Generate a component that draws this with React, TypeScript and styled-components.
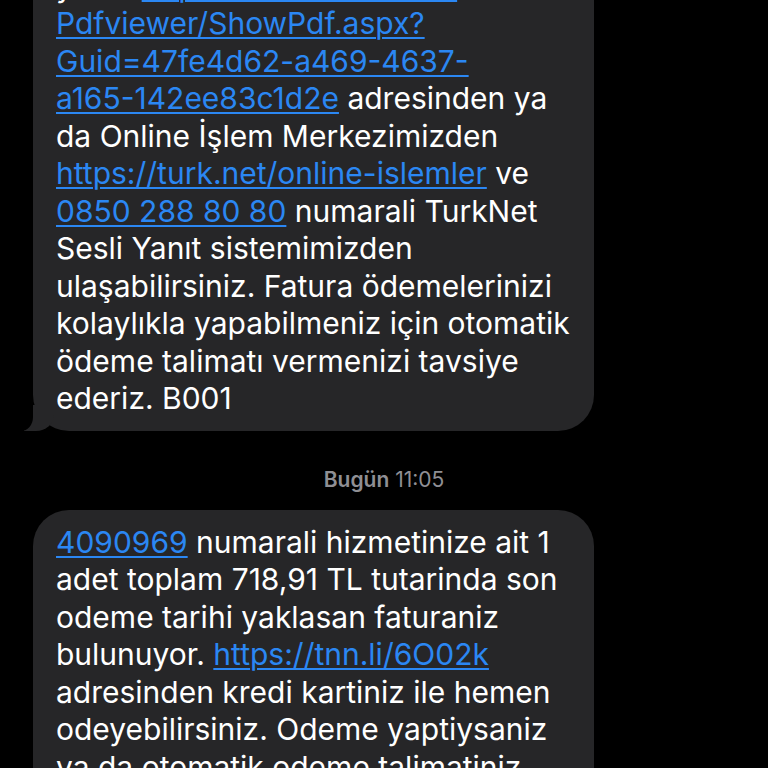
import styled, { createGlobalStyle } from 'styled-components';

const GlobalStyle = createGlobalStyle`
  html, body {
    margin: 0;
    padding: 0;
    background: #000;
  }
`;

type Seg = { t: string; link?: boolean };

const firstMessage: Seg[][] = [
  [{ t: 'Faturanızın detaylarını' }],
  [{ t: 'ya da ' }, { t: 'https://online.turk.net/', link: true }],
  [{ t: 'Pdfviewer/ShowPdf.aspx?', link: true }],
  [{ t: 'Guid=47fe4d62-a469-4637-', link: true }],
  [{ t: 'a165-142ee83c1d2e', link: true }, { t: ' adresinden ya' }],
  [{ t: 'da Online İşlem Merkezimizden' }],
  [{ t: 'https://turk.net/online-islemler', link: true }, { t: ' ve' }],
  [{ t: '0850 288 80 80', link: true }, { t: ' numarali TurkNet' }],
  [{ t: 'Sesli Yanıt sistemimizden' }],
  [{ t: 'ulaşabilirsiniz. Fatura ödemelerinizi' }],
  [{ t: 'kolaylıkla yapabilmeniz için otomatik' }],
  [{ t: 'ödeme talimatı vermenizi tavsiye' }],
  [{ t: 'ederiz. B001' }],
];

const secondMessage: Seg[][] = [
  [{ t: '4090969', link: true }, { t: ' numarali hizmetinize ait 1' }],
  [{ t: 'adet toplam 718,91 TL tutarinda son' }],
  [{ t: 'odeme tarihi yaklasan faturaniz' }],
  [{ t: 'bulunuyor. ' }, { t: 'https://tnn.li/6O02k', link: true }],
  [{ t: 'adresinden kredi kartiniz ile hemen' }],
  [{ t: 'odeyebilirsiniz. Odeme yaptiysaniz' }],
  [{ t: 'ya da otomatik odeme talimatiniz' }],
  [{ t: 'varsa bu mesaji dikkate almayiniz.' }],
];

const Screen = styled.div`
  width: 768px;
  height: 768px;
  overflow: hidden;
  background: #000;
  font-family: Inter, 'Noto Sans', sans-serif;
`;

const Thread = styled.div`
  display: flex;
  flex-direction: column;
  align-items: flex-start;
  padding-left: 33px;
  margin-top: -84px;
`;

const Bubble = styled.div<{ $tail?: boolean }>`
  position: relative;
  width: 561px;
  box-sizing: border-box;
  padding: 14px 20px 13px 23px;
  background: #262628;
  border-radius: 36px;
  color: #fff;
  font-size: 30px;
  line-height: 37.5px;

  ${(p) =>
    p.$tail &&
    `
    &::before {
      content: '';
      position: absolute;
      bottom: 0;
      left: -9px;
      width: 30px;
      height: 26px;
      background: #262628;
      border-bottom-right-radius: 18px 16px;
    }
    &::after {
      content: '';
      position: absolute;
      bottom: 0;
      left: -12px;
      width: 12px;
      height: 26px;
      background: #000;
      border-bottom-right-radius: 12px 14px;
    }
  `}
`;

const Line = styled.div`
  position: relative;
  z-index: 1;
  white-space: nowrap;
`;

const Link = styled.span`
  color: #2b87f3;
  text-decoration: underline;
  text-decoration-thickness: 2px;
  text-underline-offset: 3px;
`;

const Stamp = styled.div`
  align-self: stretch;
  margin-left: -33px;
  padding: 35px 0 16px;
  text-align: center;
  color: #8f8f94;
  font-size: 21px;
  line-height: 28px;

  b {
    font-weight: 600;
  }
`;

function Message({ lines, tail }: { lines: Seg[][]; tail?: boolean }) {
  return (
    <Bubble $tail={tail}>
      {lines.map((line, i) => (
        <Line key={i}>
          {line.map((s, j) => (s.link ? <Link key={j}>{s.t}</Link> : <span key={j}>{s.t}</span>))}
        </Line>
      ))}
    </Bubble>
  );
}

export default function App() {
  return (
    <Screen>
      <GlobalStyle />
      <Thread>
        <Message lines={firstMessage} tail />
        <Stamp>
          <b>Bugün</b> 11:05
        </Stamp>
        <Message lines={secondMessage} tail />
      </Thread>
    </Screen>
  );
}
